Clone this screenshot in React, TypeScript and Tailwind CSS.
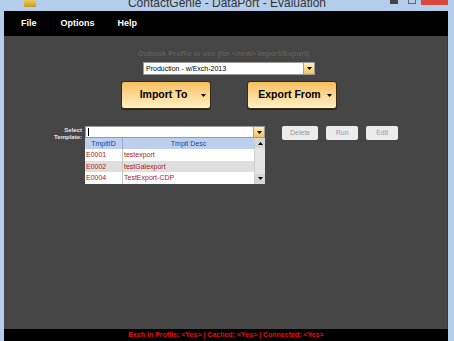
import { useState } from 'react'

type Template = { id: string; desc: string }

const TEMPLATES: Template[] = [
  { id: 'E0001', desc: 'testexport' },
  { id: 'E0002', desc: 'testGalexport' },
  { id: 'E0004', desc: 'TestExport-CDP' },
]

function DropArrow({ className = '' }: { className?: string }) {
  return (
    <svg width="5" height="3" viewBox="0 0 5 3" className={`shrink-0 ${className}`}>
      <path d="M0 0h5L2.5 3z" fill="#000" />
    </svg>
  )
}

function ComboButton() {
  return (
    <div className="w-[11px] h-full flex items-center justify-center bg-gradient-to-b from-[#fff2b8] to-[#f4c35a] border-l border-[#c9a14a]">
      <DropArrow />
    </div>
  )
}

function BigButton({ label }: { label: string }) {
  return (
    <button className="w-[90px] h-[28px] rounded-[3px] border border-[#3a2a10] bg-gradient-to-b from-[#f7bf5c] to-[#fff0c4] flex items-center gap-[4px] pl-[8px] pr-[4px] text-[10.5px] font-bold text-black whitespace-nowrap shadow-[0_1px_0_#222]">
      <span className="flex-1 text-center">{label}</span>
      <DropArrow />
    </button>
  )
}

function SmallButton({ label }: { label: string }) {
  return (
    <button className="h-[14px] px-[8px] min-w-[32px] rounded-[2px] bg-[#ebebeb] text-[7px] text-[#9a9a9a]">
      {label}
    </button>
  )
}

export default function App() {
  const [selected] = useState<string | null>(null)

  return (
    <div className="w-[454px] h-[341px] bg-[#b3cdea] flex flex-col overflow-hidden font-['Liberation_Sans',Arial,sans-serif]">
      {/* Title bar */}
      <div className="h-[11px] relative overflow-hidden shrink-0">
        <div className="absolute left-[24px] top-[-3px] w-[12px] h-[10px] bg-gradient-to-b from-[#f3e37a] to-[#c99a1e] rounded-[1px]" />
        <p className="absolute left-0 right-0 top-[-6px] text-center text-[12px] text-[#333]">
          ContactGenie - DataPort - Evaluation
        </p>
        <div className="absolute left-[390px] top-[-2px] w-[8px] h-[6px] bg-[#444]" />
        <div className="absolute left-[408px] top-[-2px] w-[8px] h-[6px] border border-[#666]" />
        <div className="absolute left-[421px] top-0 w-[27px] h-[5px] bg-[#d9463c]" />
      </div>

      <div className="flex-1 mx-[4px] mr-[6px] flex flex-col">
        {/* Menu */}
        <div className="h-[25px] bg-black flex items-center text-white text-[9px] font-bold shrink-0">
          <span className="ml-[17px]">File</span>
          <span className="ml-[24px]">Options</span>
          <span className="ml-[23px]">Help</span>
        </div>

        {/* Main */}
        <div className="flex-1 bg-[#464646] border-r border-[#3a3a3a] flex flex-col">
          <p className="mt-[12px] text-center text-[7.5px] font-bold text-[#5d5d5d] pr-[4px]">
            Outlook Profile in use (for &lt;new&gt; Import/Export)
          </p>
          <div className="mt-[3px] ml-[139px] w-[172px] h-[13px] bg-white border border-[#9a9a9a] flex">
            <span className="flex-1 pl-[2px] text-[7px] leading-[11px] text-black">Production - w/Exch-2013</span>
            <ComboButton />
          </div>

          <div className="mt-[6px] flex gap-[36px] ml-[117px]">
            <BigButton label="Import To" />
            <BigButton label="Export From" />
          </div>

          <div className="mt-[17px] flex items-start">
            <p className="w-[78px] text-right text-[6px] leading-[7px] font-bold text-[#e8e8e8] pt-[1px]">
              Select
              <br />
              Template:
            </p>
            <div className="ml-[3px] w-[180px]">
              <div className="h-[12px] bg-white border border-[#9a9a9a] flex">
                <span className="flex-1 pl-[2px] flex items-center">
                  <span className="w-px h-[8px] bg-black" />
                </span>
                <ComboButton />
              </div>
              <div className="flex bg-white">
                <div className="flex-1">
                  <div className="h-[11px] flex bg-[#bccfec] text-[7px] text-[#2a3aa0] leading-[11px]">
                    <span className="w-[38px] text-center border-r border-[#9aaccc]">TmpltID</span>
                    <span className="flex-1 text-center">Tmplt Desc</span>
                  </div>
                  {TEMPLATES.map((t, i) => (
                    <div
                      key={t.id}
                      className={`h-[11.5px] flex text-[7px] leading-[11px] text-[#b01818] ${
                        i % 2 === 1 ? 'bg-[#dedede]' : 'bg-white'
                      } ${selected === t.id ? 'bg-[#cde]' : ''}`}
                    >
                      <span className="w-[38px] pl-[1px] border-r border-[#c8c8c8]">{t.id}</span>
                      <span className="flex-1 pl-[1px]">{t.desc}</span>
                    </div>
                  ))}
                </div>
                <div className="w-[11px] bg-[#e4e4e4] flex flex-col justify-between items-center border-l border-[#cfcfcf]">
                  <div className="w-full h-[10px] bg-[#d6d6d6] flex items-center justify-center">
                    <DropArrow className="rotate-180" />
                  </div>
                  <div className="w-full h-[10px] bg-[#d6d6d6] flex items-center justify-center">
                    <DropArrow />
                  </div>
                </div>
              </div>
            </div>
            <div className="ml-[17px] flex gap-[8px]">
              <SmallButton label="Delete" />
              <SmallButton label="Run" />
              <SmallButton label="Edit" />
            </div>
          </div>
        </div>

        {/* Status */}
        <div className="h-[12px] bg-black flex items-center justify-center text-[7px] font-bold text-[#e01010] shrink-0">
          Exch in Profile: &lt;Yes&gt; | Cached: &lt;Yes&gt; | Connected: &lt;Yes&gt;
        </div>
      </div>
    </div>
  )
}
